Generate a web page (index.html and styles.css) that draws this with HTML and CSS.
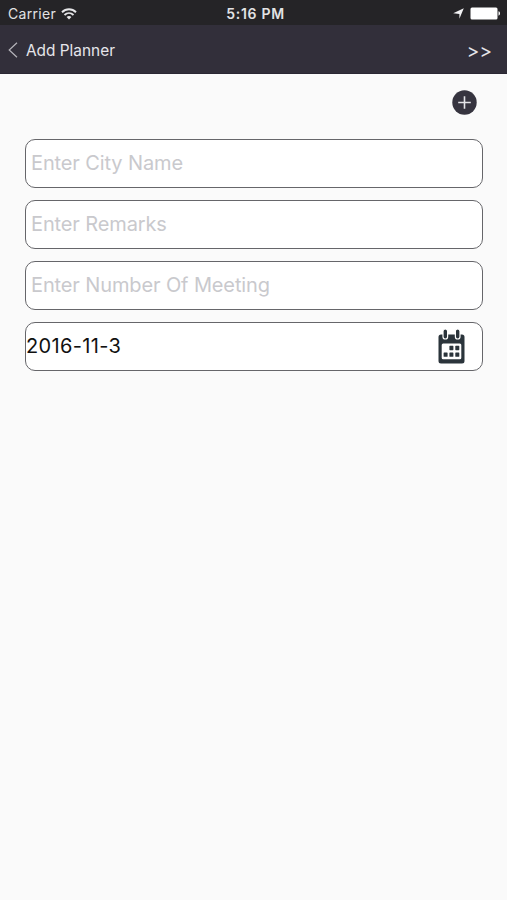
FILE: index.html
```html
<!DOCTYPE html>
<html lang="en">
<head>
    <meta charset="UTF-8">
    <meta name="viewport" content="width=device-width, initial-scale=1.0">
    <title>Add Planner</title>
    <link rel="stylesheet" href="styles.css">
</head>
<body>
    <div class="status-bar">
        <div class="status-left">
            <span class="carrier">Carrier</span>
            <svg class="wifi" width="16" height="12" viewBox="0 0 16 12" fill="none" stroke="#e6e6e8" stroke-width="1.9">
                <path d="M1 4.2C5 .3 11 .3 15 4.2"/>
                <path d="M3.5 7c2.6-2.5 6.4-2.5 9 0"/>
                <path d="M5.6 9C7 7.7 9 7.7 10.4 9L8 11.4z" fill="#e6e6e8" stroke="none"/>
            </svg>
        </div>
        <span class="time">5:16 PM</span>
        <div class="status-right">
            <svg width="11" height="11" viewBox="0 0 11 11">
                <path d="M10.8.2L6.4 10.8V5.9L.2 5.3z" fill="#f2f2f4"/>
            </svg>
            <svg width="31" height="13" viewBox="0 0 31 13" fill="#fff">
                <rect x=".5" y=".5" width="27" height="12" rx="1.5"/>
                <path d="M28.5 4.3c2 .6 2 3.8 0 4.4z"/>
            </svg>
        </div>
    </div>

    <div class="navbar">
        <a class="back" href="#">
            <svg width="10" height="16" viewBox="0 0 10 16" fill="none" stroke="#b5b4ba" stroke-width="1.2">
                <path d="M9 .8L1.2 8L9 15.2"/>
            </svg>
            <span>Add Planner</span>
        </a>
        <a class="next" href="#">&gt;&gt;</a>
    </div>

    <div class="content">
        <div class="toolbar">
            <button class="add-button" type="button" aria-label="Add">
                <svg width="25" height="25" viewBox="0 0 25 25">
                    <circle cx="12.5" cy="12.5" r="12.2" fill="#36343f"/>
                    <path d="M12.5 6.2v12.6M6.2 12.5h12.6" stroke="#e4e4e8" stroke-width="1.6"/>
                </svg>
            </button>
        </div>

        <form class="planner-form">
            <input class="field" type="text" placeholder="Enter City Name">
            <input class="field" type="text" placeholder="Enter Remarks">
            <input class="field" type="text" placeholder="Enter Number Of Meeting">
            <div class="field date-field">
                <span class="date">2016-11-3</span>
                <svg width="27" height="35" viewBox="0 0 27 35">
                    <path d="M3 5.5h21a2.5 2.5 0 0 1 2.5 2.5v24a2.5 2.5 0 0 1-2.5 2.5H3A2.5 2.5 0 0 1 .5 32V8A2.5 2.5 0 0 1 3 5.5z" fill="#2b343b"/>
                    <rect x="3.7" y="14.6" width="19.6" height="15.6" rx="1.5" fill="#fff"/>
                    <g fill="#2b343b" stroke="#fff" stroke-width="1.2">
                        <rect x="5" y="0" width="4.6" height="10" rx="2.3"/>
                        <rect x="17.4" y="0" width="4.6" height="10" rx="2.3"/>
                    </g>
                    <g fill="#2b343b">
                        <rect x="11.4" y="16.8" width="4" height="4.4" rx=".6"/>
                        <rect x="17.3" y="16.8" width="4" height="4.4" rx=".6"/>
                        <rect x="5.6" y="23.4" width="4" height="4.4" rx=".6"/>
                        <rect x="11.4" y="23.4" width="4" height="4.4" rx=".6"/>
                        <rect x="17.3" y="23.4" width="4" height="4.4" rx=".6"/>
                    </g>
                </svg>
            </div>
        </form>
    </div>
</body>
</html>
```
FILE: styles.css
```css
* {
    box-sizing: border-box;
}
body {
    margin: 0;
    min-height: 900px;
    background-color: #fafafa;
    font-family: Inter, Roboto, sans-serif;
}
.status-bar {
    display: flex;
    align-items: center;
    height: 25px;
    padding: 2px 6px 0 8px;
    background-color: #252427;
    color: #e2e2e4;
    font-size: 14px;
}
.status-left,
.status-right {
    display: flex;
    align-items: center;
    flex: 1;
}
.status-left {
    gap: 5px;
}
.carrier {
    letter-spacing: 0.3px;
}
.status-right {
    justify-content: flex-end;
    gap: 6px;
}
.time {
    padding-left: 2px;
    font-weight: 600;
    letter-spacing: 0.7px;
}
.navbar {
    display: flex;
    align-items: center;
    justify-content: space-between;
    height: 49px;
    padding: 2px 15px 0 8px;
    background-color: #322f3a;
    border-bottom: 1px solid #2a2733;
}
.navbar a {
    color: #e6e5ea;
    text-decoration: none;
}
.back {
    display: flex;
    align-items: center;
    gap: 8px;
    font-size: 15.4px;
}
.next {
    font-size: 19px;
    padding-top: 2px;
}
.content {
    padding: 16px 25px 0;
}
.toolbar {
    display: flex;
    justify-content: flex-end;
    padding-right: 5px;
}
.add-button {
    display: block;
    width: 25px;
    height: 25px;
    padding: 0;
    border: none;
    background: none;
    cursor: pointer;
}
.add-button svg {
    display: block;
}
.planner-form {
    display: flex;
    flex-direction: column;
    gap: 12px;
    margin-top: 24px;
}
.field {
    width: 458px;
    height: 49px;
    padding: 0 5px 2px;
    border: 1px solid #66666a;
    border-radius: 10px;
    background-color: #fff;
    color: #111;
    font-family: inherit;
    font-size: 20px;
    letter-spacing: -0.12px;
}
.field::placeholder {
    color: #c9c9cd;
}
.date-field {
    display: flex;
    align-items: center;
    justify-content: space-between;
    padding: 0 17px 1px 0;
}
.date {
    letter-spacing: 0.35px;
}
```
